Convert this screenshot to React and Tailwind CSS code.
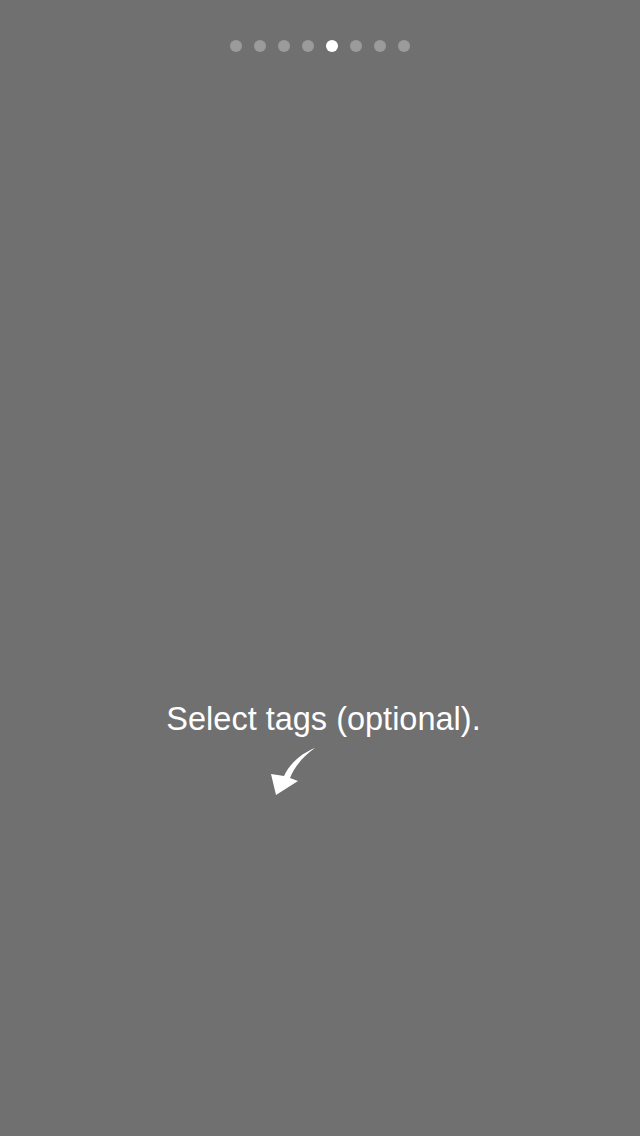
export default function App() {
  const dots = [0, 1, 2, 3, 4, 5, 6, 7];
  return (
    <div className="w-[640px] h-[1136px] bg-[#707070] flex flex-col items-center overflow-hidden">
      <div className="flex gap-[12px] mt-[40px]">
        {dots.map((i) => (
          <div
            key={i}
            className={i === 4 ? "w-[12px] h-[12px] rounded-full bg-white" : "w-[12px] h-[12px] rounded-full bg-[#9b9b9b]"}
          />
        ))}
      </div>
      <div
        className="mt-[649px] text-white text-[32.5px] leading-[36px] pl-[7px]"
        style={{ fontFamily: '"Liberation Sans", Arial, sans-serif', fontWeight: 300 }}
      >
        Select tags (optional).
      </div>
      <div className="w-[640px] flex">
        <svg width="52" height="54" viewBox="266 744 52 54" className="ml-[266px] mt-[7px]">
          <path
            d="M315,748 C302,753 290,763 284,776 L271,774 L276,795 L298,781 L290,778 C294,768 302,757 315,748 Z"
            fill="#ffffff"
          />
        </svg>
      </div>
    </div>
  );
}
